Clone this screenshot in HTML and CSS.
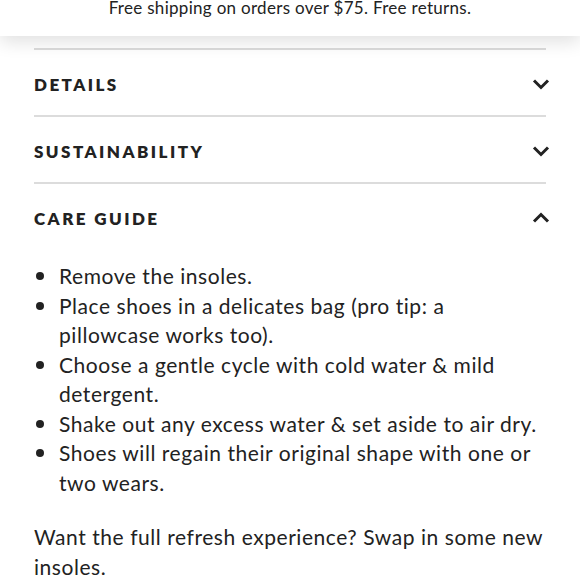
FILE: index.html
```html
<!DOCTYPE html>
<html lang="en">
<head>
  <meta charset="UTF-8" />
  <meta name="viewport" content="width=device-width, initial-scale=1.0" />
  <title>Care Guide</title>
  <link rel="stylesheet" href="styles.css">
</head>
<body>
  <header class="banner">Free shipping on orders over $75. Free returns.</header>
  <main class="accordion">
    <div class="panel">
      <div class="panel-head">
        <h2>Details</h2>
        <svg class="chev" width="18" height="12" viewBox="0 0 18 12"><path d="M2 2.5l7 7 7-7" fill="none" stroke="#222" stroke-width="3"/></svg>
      </div>
    </div>
    <div class="panel">
      <div class="panel-head">
        <h2>Sustainability</h2>
        <svg class="chev" width="18" height="12" viewBox="0 0 18 12"><path d="M2 2.5l7 7 7-7" fill="none" stroke="#222" stroke-width="3"/></svg>
      </div>
    </div>
    <div class="panel open">
      <div class="panel-head">
        <h2>Care Guide</h2>
        <svg class="chev" width="18" height="12" viewBox="0 0 18 12"><path d="M2 9.5l7-7 7 7" fill="none" stroke="#222" stroke-width="3"/></svg>
      </div>
      <div class="panel-body">
        <ul>
          <li>Remove the insoles.</li>
          <li>Place shoes in a delicates bag (pro tip: a pillowcase works too).</li>
          <li>Choose a gentle cycle with cold water &amp; mild detergent.</li>
          <li>Shake out any excess water &amp; set aside to air dry.</li>
          <li>Shoes will regain their original shape with one or two wears.</li>
        </ul>
        <p>Want the full refresh experience? Swap in some new insoles.</p>
      </div>
    </div>
  </main>
</body>
</html>
```

FILE: styles.css
```css
body {
  margin: 0;
  font-family: Lato, sans-serif;
  color: #222;
  background: #fff;
}
.banner {
  position: relative;
  z-index: 1;
  height: 36px;
  line-height: 16px;
  font-size: 17px;
  letter-spacing: 0.3px;
  text-align: center;
  background: #fff;
  box-shadow: 0 6px 18px rgba(0,0,0,0.12);
}
.accordion {
  padding: 12px 34px 0;
}
.panel {
  border-top: 2px solid #dcdcdc;
}
.panel-head {
  display: flex;
  align-items: center;
  justify-content: space-between;
  height: 65px;
  padding-top: 3px;
  box-sizing: border-box;
}
.panel-head h2 {
  margin: 0;
  font-size: 17px;
  font-weight: 800;
  letter-spacing: 2.45px;
  text-transform: uppercase;
}
.chev { margin-right: -4px; }
.panel-body {
  padding-top: 12px;
  font-size: 21px;
  letter-spacing: 0.55px;
  line-height: 29.5px;
}
.panel-body ul {
  margin: 0;
  padding-left: 2px;
  list-style: none;
}
.panel-body li {
  display: flex;
}
.panel-body li::before {
  content: "";
  flex-shrink: 0;
  width: 8px;
  height: 8px;
  margin: 11px 15px 0 0;
  border-radius: 50%;
  background: #222;
}
.panel-body p {
  margin: 25px 0 0;
}
```
